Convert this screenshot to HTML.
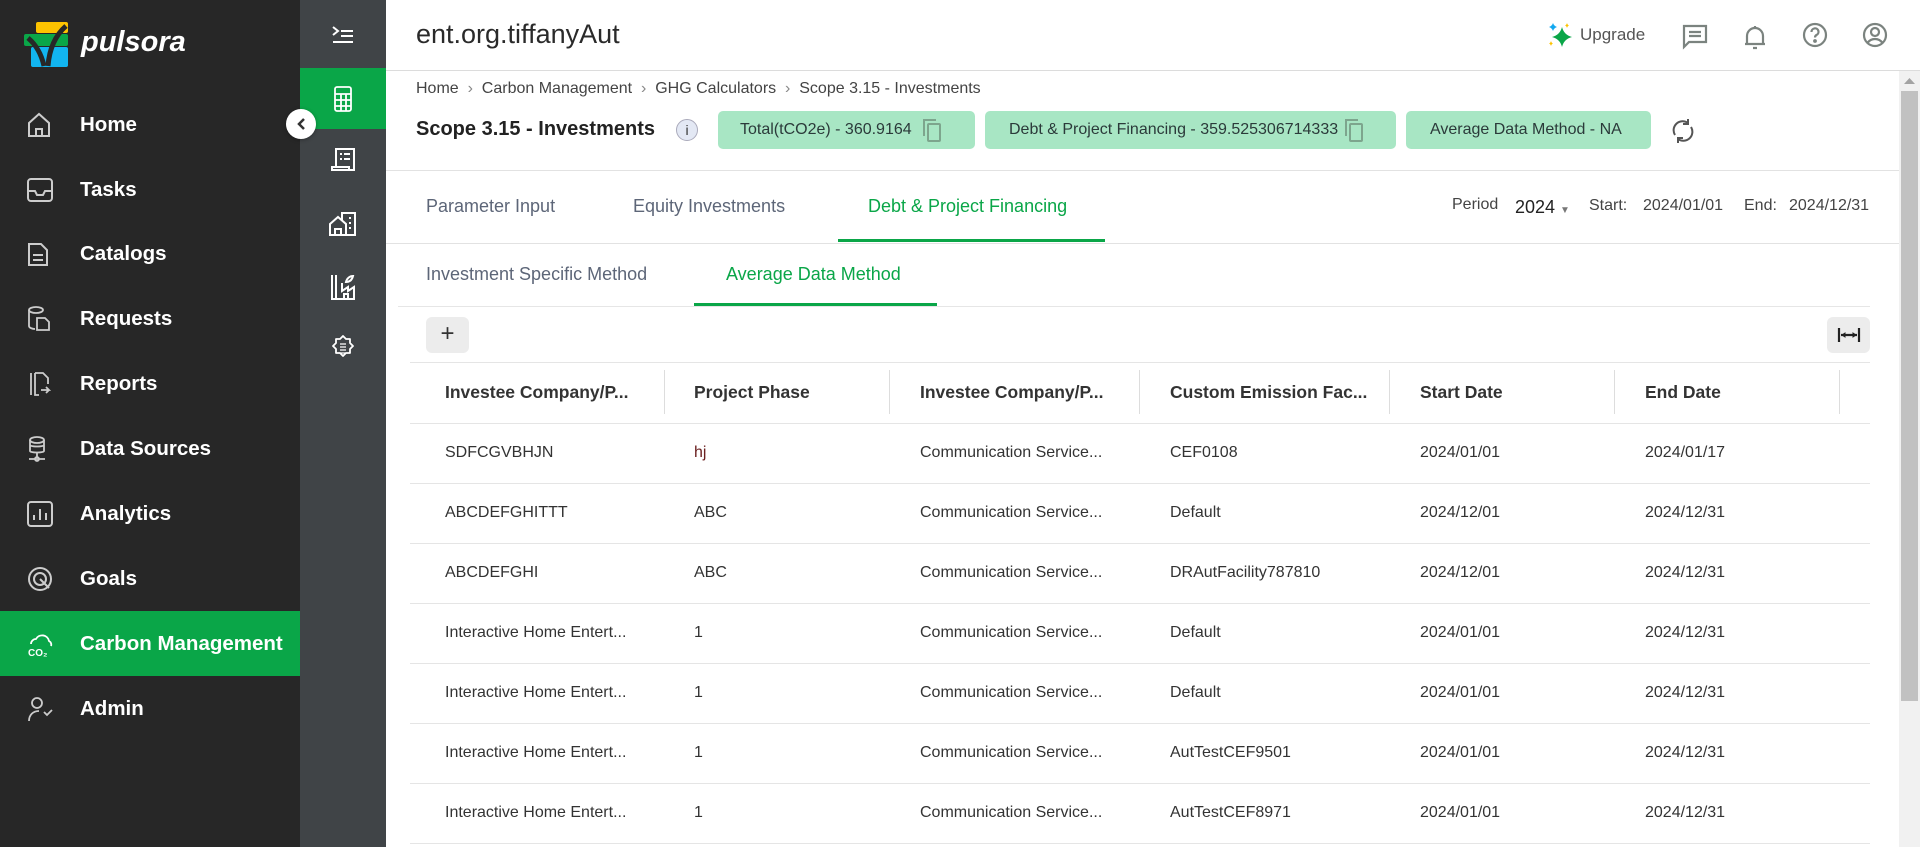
<!DOCTYPE html>
<html><head><meta charset="utf-8">
<style>
*{box-sizing:border-box;margin:0;padding:0}
body{width:1920px;height:847px;overflow:hidden;background:#fff;font-family:"Liberation Sans",sans-serif;position:relative;color:#333}
.a{position:absolute;white-space:nowrap}
#sb{left:0;top:0;width:300px;height:847px;background:#272727}
#sb2{left:300px;top:0;width:86px;height:847px;background:#404447}
.nav{left:0;width:300px;height:65px;display:flex;align-items:center;color:#fff;font-weight:bold;font-size:20.5px}
.nav .t{position:absolute;left:80px}
.nav svg{position:absolute;left:27px}
.ic2{left:300px;width:86px;height:61px;display:flex;align-items:center;justify-content:center}
.tab{font-size:18px;color:#5d6678;top:196px}
.th{font-size:17.5px;font-weight:bold;color:#333;top:382px}
.td{font-size:16px;color:#333}
.sep{width:1px;height:44px;background:#ddd;top:370px}
.hl{height:1px;background:#e5e5e5}
.pill{top:111px;height:38px;background:#a8e6c4;border-radius:5px;font-size:16px;color:#2b3a3a;display:flex;align-items:center;padding-left:22px}
</style></head><body>
<div class="a" id="sb"></div>
<div class="a" id="sb2"></div>
<!-- logo -->
<svg class="a" style="left:24px;top:22px" width="46" height="46" viewBox="0 0 46 46">
<rect x="12" y="0" width="32" height="11" rx="2" fill="#fdc300"/>
<rect x="0" y="12" width="44" height="12" rx="2" fill="#0aa648"/>
<rect x="7" y="25" width="37" height="20" rx="2" fill="#12b5f0"/>
<path d="M4 16 Q16 26 20 44 M42 4 Q26 18 24 44" stroke="#272727" stroke-width="5" fill="none"/>
</svg>
<div class="a" style="left:81px;top:26px;color:#fff;font-size:29px;font-weight:bold;font-style:italic">pulsora</div>

<div class="a nav" style="top:92px"><svg width="24" height="26" viewBox="0 0 24 26" fill="none" stroke="#ccc" stroke-width="2"><path d="M2 11L12 2l10 9v13H2z M9 24v-7h6v7"/></svg><span class="t">Home</span></div>
<div class="a nav" style="top:157px"><svg width="26" height="24" viewBox="0 0 26 24" fill="none" stroke="#ccc" stroke-width="2"><rect x="1" y="1" width="24" height="22" rx="3"/><path d="M1 13h7l2 4h6l2-4h7"/></svg><span class="t">Tasks</span></div>
<div class="a nav" style="top:221px"><svg width="22" height="26" viewBox="0 0 22 26" fill="none" stroke="#ccc" stroke-width="2"><path d="M2 3h12l6 6v15H2z M6 14h10M6 19h10"/></svg><span class="t">Catalogs</span></div>
<div class="a nav" style="top:286px"><svg width="24" height="26" viewBox="0 0 24 26" fill="none" stroke="#ccc" stroke-width="1.8"><ellipse cx="9" cy="4" rx="7" ry="3"/><path d="M2 4v16c0 2 4 3 6 3M10 12h8l4 4v8H10z"/></svg><span class="t">Requests</span></div>
<div class="a nav" style="top:351px"><svg width="24" height="26" viewBox="0 0 24 26" fill="none" stroke="#ccc" stroke-width="1.8"><path d="M4 2v22M8 2h8l5 5v6M8 2v22h4M14 19h8l-3-3m3 3l-3 3"/></svg><span class="t">Reports</span></div>
<div class="a nav" style="top:416px"><svg width="20" height="26" viewBox="0 0 20 26" fill="none" stroke="#ccc" stroke-width="1.8"><ellipse cx="10" cy="4" rx="7" ry="3"/><path d="M3 4v11c0 2 14 2 14 0V4M3 9c0 2 14 2 14 0M10 17v5M2 23h16"/><circle cx="10" cy="23" r="2"/></svg><span class="t">Data Sources</span></div>
<div class="a nav" style="top:481px"><svg width="26" height="26" viewBox="0 0 26 26" fill="none" stroke="#ccc" stroke-width="2"><rect x="1" y="1" width="24" height="24" rx="3"/><path d="M7 19v-5M13 19V8M19 19v-7"/></svg><span class="t">Analytics</span></div>
<div class="a nav" style="top:546px"><svg width="26" height="26" viewBox="0 0 26 26" fill="none" stroke="#ccc" stroke-width="2"><circle cx="13" cy="13" r="11"/><circle cx="13" cy="13" r="6"/><path d="M13 13l9 9"/></svg><span class="t">Goals</span></div>
<div class="a nav" style="top:611px;background:#0aa648"><svg width="28" height="28" viewBox="0 0 28 28" fill="none" stroke="#fff" stroke-width="1.8"><path d="M4 14a5 5 0 0 1 5-5a7 7 0 0 1 13 2a4 4 0 0 1 2 5"/><text x="1" y="26" font-size="10" font-weight="bold" fill="#fff" stroke="none" font-family="Liberation Sans">CO₂</text></svg><span class="t">Carbon Management</span></div>
<div class="a nav" style="top:676px"><svg width="26" height="26" viewBox="0 0 26 26" fill="none" stroke="#ccc" stroke-width="1.8"><circle cx="10" cy="7" r="5"/><path d="M2 25c0-6 4-10 10-10M17 16l3 3 5-5"/></svg><span class="t">Admin</span></div>

<!-- sidebar 2 icons -->
<div class="a ic2" style="top:4px"><svg width="22" height="18" viewBox="0 0 22 18" fill="none" stroke="#fff" stroke-width="2"><path d="M1 1l5 4-5 4M9 5h12M9 10h12M1 16h20"/></svg></div>
<div class="a ic2" style="top:68px;background:#0aa648"><svg width="18" height="26" viewBox="0 0 18 26" fill="none" stroke="#fff" stroke-width="1.8"><rect x="1" y="1" width="16" height="24" rx="2"/><path d="M1 8h16M1 14h16M1 20h16M7 8v17M12 8v17"/></svg></div>
<div class="a ic2" style="top:129px"><svg width="26" height="26" viewBox="0 0 26 26" fill="none" stroke="#fff" stroke-width="2"><path d="M6 20V2h18v21H2v-3h17v3M10 7h2M14 7h6M10 12h2M14 12h6"/></svg></div>
<div class="a ic2" style="top:193px"><svg width="28" height="24" viewBox="0 0 28 24" fill="none" stroke="#fff" stroke-width="2"><path d="M1 12L9 5l8 7v11H1zM6 23v-6h6v6M13 8V1h13v22h-9M20 6h2M20 11h2M20 16h2"/></svg></div>
<div class="a ic2" style="top:256px"><svg width="26" height="26" viewBox="0 0 26 26" fill="none" stroke="#fff" stroke-width="2"><path d="M2 1v24h22V13l-6 4v-4l-6 4V9M6 1v24M14 25v-5h4v5"/><path d="M16 8c1-4 4-6 7-6-1 4-3 6-7 6z"/></svg></div>
<div class="a ic2" style="top:317px"><svg width="26" height="26" viewBox="0 0 26 26" fill="none" stroke="#fff" stroke-width="1.8"><path d="M13 1l3 3h4v4l3 3-3 3v4h-4l-3 3-3-3H6v-4l-3-3 3-3V4h4z" stroke-linejoin="round"/><path d="M10 9h6M10 12h6M10 15h6M10 18h6" stroke-width="1.2"/></svg></div>
<div class="a" style="left:286px;top:109px;width:30px;height:30px;border-radius:50%;background:#fff;box-shadow:0 1px 4px rgba(0,0,0,.3)"><svg style="position:absolute;left:9px;top:8px" width="12" height="14" viewBox="0 0 12 14"><path d="M9 2L4 7l5 5" stroke="#333" stroke-width="2.5" fill="none"/></svg></div>

<!-- header -->
<div class="a" style="left:386px;top:70px;width:1534px;height:1px;background:#dcdcdc"></div>
<div class="a" style="left:416px;top:19px;font-size:27px;color:#2a2a2a">ent.org.tiffanyAut</div>
<svg class="a" style="left:1548px;top:22px" width="28" height="26" viewBox="0 0 28 26"><path d="M14 5 Q16 13 24 15 Q16 17 14 25 Q12 17 4 15 Q12 13 14 5z" fill="#0aa648"/><path d="M5 1Q6 4 9 5Q6 6 5 9Q4 6 1 5Q4 4 5 1z" fill="#12a8f0"/><path d="M19 1Q19.5 3 21 3.5Q19.5 4 19 6Q18.5 4 17 3.5Q18.5 3 19 1z" fill="#fdc300"/><path d="M3 19Q3.5 21 5 21.5Q3.5 22 3 24Q2.5 22 1 21.5Q2.5 21 3 19z" fill="#fdc300"/></svg>
<div class="a" style="left:1580px;top:25px;font-size:17px;color:#555">Upgrade</div>
<svg class="a" style="left:1682px;top:24px" width="26" height="26" viewBox="0 0 26 26" fill="none" stroke="#7b837f" stroke-width="2.2"><path d="M2 2h22v16H7l-5 5z M7 8h12M7 12h12"/></svg>
<svg class="a" style="left:1744px;top:24px" width="22" height="26" viewBox="0 0 22 26" fill="none" stroke="#7b837f" stroke-width="2.2"><path d="M3 20V12a8 8 0 0 1 16 0v8zM1 20h20M9 24h4M11 2v2"/></svg>
<svg class="a" style="left:1802px;top:22px" width="26" height="26" viewBox="0 0 26 26" fill="none" stroke="#7b837f" stroke-width="2.2"><circle cx="13" cy="13" r="11"/><path d="M9.5 10a3.5 3.5 0 1 1 5 3c-1 .6-1.5 1.2-1.5 2.5"/><circle cx="13" cy="19" r=".8" fill="#7b837f"/></svg>
<svg class="a" style="left:1862px;top:22px" width="26" height="26" viewBox="0 0 26 26" fill="none" stroke="#7b837f" stroke-width="2.2"><circle cx="13" cy="13" r="11"/><circle cx="13" cy="10" r="4"/><path d="M5.5 21c2-3 4.5-4 7.5-4s5.5 1 7.5 4"/></svg>
<!-- scrollbar -->
<div class="a" style="left:1899px;top:71px;width:21px;height:776px;background:#f1f1f1"></div>
<div class="a" style="left:1901px;top:91px;width:17px;height:610px;background:#c1c1c1"></div>
<svg class="a" style="left:1904px;top:78px" width="11" height="7"><path d="M0 6L5.5 0 11 6z" fill="#a3a3a3"/></svg>

<!-- breadcrumb -->
<div class="a" style="left:416px;top:80px;font-size:16px;color:#444">Home &nbsp;<span style="color:#888">›</span>&nbsp; Carbon Management &nbsp;<span style="color:#888">›</span>&nbsp; GHG Calculators &nbsp;<span style="color:#888">›</span>&nbsp; Scope 3.15 - Investments</div>
<div class="a" style="left:416px;top:118px;font-size:20px;font-weight:bold;color:#222">Scope 3.15 - Investments</div>
<div class="a" style="left:676px;top:119px;width:22px;height:22px;border-radius:50%;background:#e3e8f4;border:1px solid #aab;font-size:14px;text-align:center;line-height:20px;color:#333">i</div>
<div class="a pill" style="left:718px;width:257px">Total(tCO2e) - 360.9164<svg style="margin-left:10px" width="20" height="24" viewBox="0 0 20 24" fill="none" stroke="#7da58d" stroke-width="2"><rect x="6" y="6" width="12" height="17" rx="1"/><path d="M2 18V2h12"/></svg></div>
<div class="a pill" style="left:985px;width:411px;padding-left:24px">Debt &amp; Project Financing - 359.525306714333<svg style="margin-left:6px" width="20" height="24" viewBox="0 0 20 24" fill="none" stroke="#7da58d" stroke-width="2"><rect x="6" y="6" width="12" height="17" rx="1"/><path d="M2 18V2h12"/></svg></div>
<div class="a pill" style="left:1406px;width:245px;padding-left:24px">Average Data Method - NA</div>
<svg class="a" style="left:1671px;top:117px" width="24" height="28" viewBox="0 0 24 28" fill="none" stroke="#555" stroke-width="2"><path d="M4 18a9 9 0 0 1 13-12M20 10a9 9 0 0 1-13 12M17 2v5h-5M7 26v-5h5"/></svg>
<div class="a" style="left:386px;top:170px;width:1513px;height:1px;background:#e2e2e2"></div>

<!-- tabs -->
<div class="a tab" style="left:426px">Parameter Input</div>
<div class="a tab" style="left:633px">Equity Investments</div>
<div class="a tab" style="left:868px;color:#0aa648">Debt &amp; Project Financing</div>
<div class="a" style="left:838px;top:239px;width:267px;height:3px;background:#0aa648"></div>
<div class="a" style="left:1452px;top:196px;font-size:16px;color:#444">Period</div>
<div class="a" style="left:1515px;top:197px;font-size:18px;color:#222">2024 <span style="font-size:10px;color:#777">▼</span></div>
<div class="a" style="left:1589px;top:197px;font-size:16px;color:#444">Start:</div>
<div class="a" style="left:1643px;top:197px;font-size:16px;color:#444">2024/01/01</div>
<div class="a" style="left:1744px;top:197px;font-size:16px;color:#444">End:</div>
<div class="a" style="left:1789px;top:197px;font-size:16px;color:#444">2024/12/31</div>
<div class="a" style="left:386px;top:243px;width:1513px;height:1px;background:#e2e2e2"></div>

<div class="a tab" style="left:426px;top:264px">Investment Specific Method</div>
<div class="a tab" style="left:726px;top:264px;color:#0aa648">Average Data Method</div>
<div class="a" style="left:694px;top:303px;width:243px;height:3px;background:#0aa648"></div>
<div class="a" style="left:398px;top:306px;width:1472px;height:1px;background:#e6e6e6"></div>

<div class="a" style="left:426px;top:317px;width:43px;height:36px;background:#ececec;border-radius:6px;text-align:center;font-size:24px;line-height:34px;color:#333">+</div>
<div class="a" style="left:1827px;top:317px;width:43px;height:36px;background:#ececec;border-radius:6px"><svg style="position:absolute;left:10px;top:10px" width="24" height="16" viewBox="0 0 24 16" fill="none" stroke="#222" stroke-width="2.2"><path d="M2 1v14M22 1v14M4 8h16"/><path d="M5 8l3-2v4zM19 8l-3-2v4z" fill="#222" stroke-width="1"/></svg></div>

<!-- table -->
<div class="a hl" style="left:410px;top:362px;width:1460px"></div>
<div class="a th" style="left:445px">Investee Company/P...</div>
<div class="a th" style="left:694px">Project Phase</div>
<div class="a th" style="left:920px">Investee Company/P...</div>
<div class="a th" style="left:1170px">Custom Emission Fac...</div>
<div class="a th" style="left:1420px">Start Date</div>
<div class="a th" style="left:1645px">End Date</div>
<div class="a sep" style="left:664px"></div><div class="a sep" style="left:889px"></div><div class="a sep" style="left:1139px"></div><div class="a sep" style="left:1389px"></div><div class="a sep" style="left:1614px"></div><div class="a sep" style="left:1839px"></div>
<div class="a hl" style="left:410px;top:423px;width:1460px"></div>
<div class="a hl" style="left:410px;top:483px;width:1460px"></div>
<div class="a hl" style="left:410px;top:543px;width:1460px"></div>
<div class="a hl" style="left:410px;top:603px;width:1460px"></div>
<div class="a hl" style="left:410px;top:663px;width:1460px"></div>
<div class="a hl" style="left:410px;top:723px;width:1460px"></div>
<div class="a hl" style="left:410px;top:783px;width:1460px"></div>
<div class="a hl" style="left:410px;top:843px;width:1460px"></div>

<div class="a td" style="left:445px;top:444px">SDFCGVBHJN</div><div class="a td" style="left:694px;top:444px;color:#6b2020">hj</div><div class="a td" style="left:920px;top:444px">Communication Service...</div><div class="a td" style="left:1170px;top:444px">CEF0108</div><div class="a td" style="left:1420px;top:444px">2024/01/01</div><div class="a td" style="left:1645px;top:444px">2024/01/17</div>
<div class="a td" style="left:445px;top:504px">ABCDEFGHITTT</div><div class="a td" style="left:694px;top:504px">ABC</div><div class="a td" style="left:920px;top:504px">Communication Service...</div><div class="a td" style="left:1170px;top:504px">Default</div><div class="a td" style="left:1420px;top:504px">2024/12/01</div><div class="a td" style="left:1645px;top:504px">2024/12/31</div>
<div class="a td" style="left:445px;top:564px">ABCDEFGHI</div><div class="a td" style="left:694px;top:564px">ABC</div><div class="a td" style="left:920px;top:564px">Communication Service...</div><div class="a td" style="left:1170px;top:564px">DRAutFacility787810</div><div class="a td" style="left:1420px;top:564px">2024/12/01</div><div class="a td" style="left:1645px;top:564px">2024/12/31</div>
<div class="a td" style="left:445px;top:624px">Interactive Home Entert...</div><div class="a td" style="left:694px;top:624px">1</div><div class="a td" style="left:920px;top:624px">Communication Service...</div><div class="a td" style="left:1170px;top:624px">Default</div><div class="a td" style="left:1420px;top:624px">2024/01/01</div><div class="a td" style="left:1645px;top:624px">2024/12/31</div>
<div class="a td" style="left:445px;top:684px">Interactive Home Entert...</div><div class="a td" style="left:694px;top:684px">1</div><div class="a td" style="left:920px;top:684px">Communication Service...</div><div class="a td" style="left:1170px;top:684px">Default</div><div class="a td" style="left:1420px;top:684px">2024/01/01</div><div class="a td" style="left:1645px;top:684px">2024/12/31</div>
<div class="a td" style="left:445px;top:744px">Interactive Home Entert...</div><div class="a td" style="left:694px;top:744px">1</div><div class="a td" style="left:920px;top:744px">Communication Service...</div><div class="a td" style="left:1170px;top:744px">AutTestCEF9501</div><div class="a td" style="left:1420px;top:744px">2024/01/01</div><div class="a td" style="left:1645px;top:744px">2024/12/31</div>
<div class="a td" style="left:445px;top:804px">Interactive Home Entert...</div><div class="a td" style="left:694px;top:804px">1</div><div class="a td" style="left:920px;top:804px">Communication Service...</div><div class="a td" style="left:1170px;top:804px">AutTestCEF8971</div><div class="a td" style="left:1420px;top:804px">2024/01/01</div><div class="a td" style="left:1645px;top:804px">2024/12/31</div>
</body></html>
